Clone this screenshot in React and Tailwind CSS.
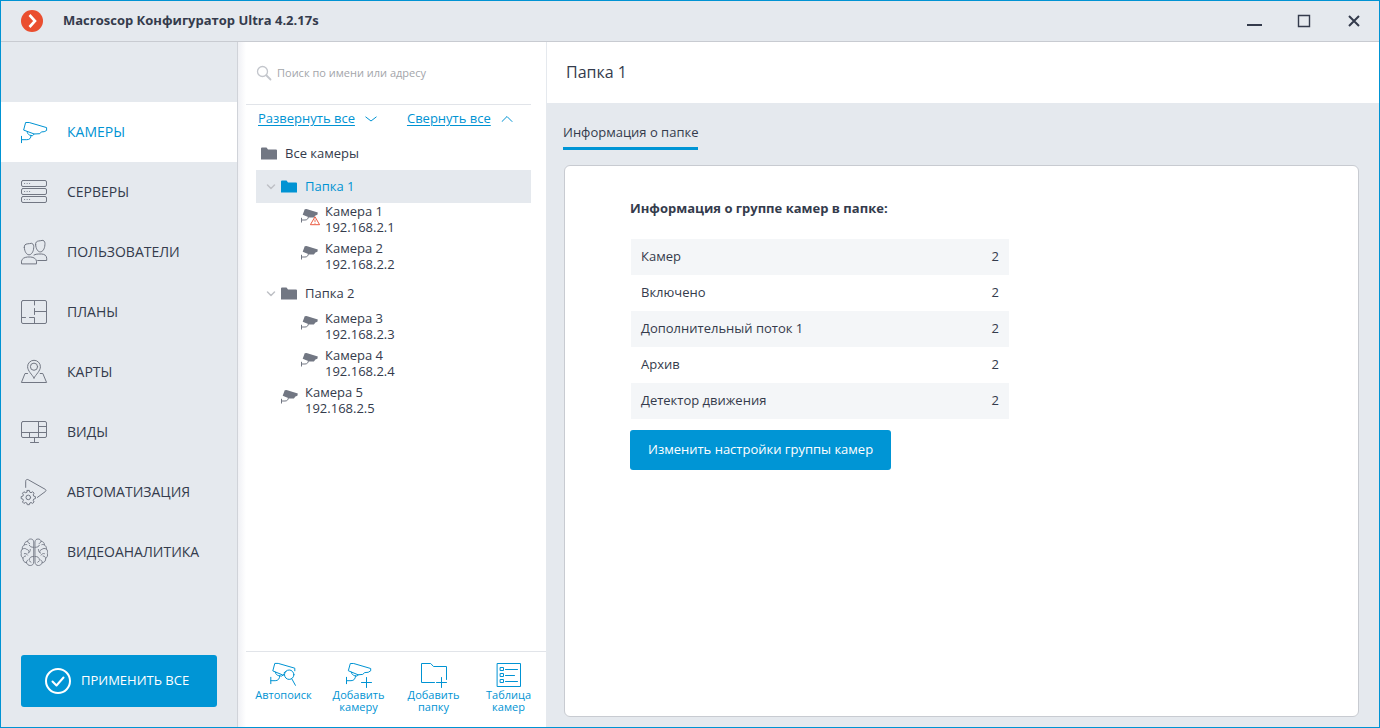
import React, { useState } from 'react';

const IconSvg = ({ width = 28, height = 28, className = '', children }) => (
  <svg
    width={width}
    height={height}
    viewBox={`0 0 ${width} ${height}`}
    fill="none"
    stroke="currentColor"
    strokeLinecap="round"
    strokeLinejoin="round"
    className={`shrink-0 ${className}`}
    aria-hidden="true"
  >
    {children}
  </svg>
);

// Sidebar icons
const CameraIcon = () => (
  <IconSvg>
    <path d="M6 4.5h3.2L26.6 9.6v2.9l-2.4 1.2-2.8.2-1.6 1.8-5.6.3L4 12.2z" />
    <path d="M7.2 13.8c.2 1.7 1 2.5 2.2 3.2l3 .8 1.8-1.8M11 17.5c.2 2.6-1.4 4.2-4.2 4.2H1.5M1.5 18.3v6.4" />
  </IconSvg>
);

const ServersIcon = () => (
  <IconSvg>
    {[2.5, 10.5, 18.5].map((y) => (
      <g key={y}>
        <rect x="1.5" y={y} width="25" height="6" rx="1.5" />
        <path d={`M4.6 ${y + 3}h.1M7.1 ${y + 3}h.1M9.6 ${y + 3}h.1`} />
      </g>
    ))}
  </IconSvg>
);

const UsersIcon = () => (
  <IconSvg>
    <path d="M4.3 9.5C4 7 5.5 6 7.2 5.9c1.9 0 2.7-.6 4.6-.6 1.9.9 2.1 2.6 1.9 4.5-.2 4-2.3 7-4.7 7s-4.4-3-4.7-7.3z" />
    <path d="M1.5 25.5v-2.3c.4-2.6 2.8-3.9 6-4.2h3.2c3.2.3 5.4 1.7 5.8 4.2v2.3z" />
    <path d="M15.6 6.7c-.3-2.5 1.2-3.5 2.9-3.7 1.9 0 2.6-.7 4.5-.7 1.9.9 2.1 2.6 1.9 4.5-.2 4-2.2 7.1-4.6 7.1s-4.4-2.9-4.7-7.2z" />
    <path d="M14 17c1.3-.7 2.8-1 4.8-1h2.9c2.9.3 4.8 1.5 5 4.2v2.3h-9" />
  </IconSvg>
);

const PlansIcon = () => (
  <IconSvg>
    <rect x="1.5" y="2.5" width="25" height="23" rx="1.5" />
    <path d="M14.5 2.5v4.5M14.5 10.5v6M14.5 13.5h12M1.5 19.5h4M9.5 19.5h5v6" />
  </IconSvg>
);

const MapsIcon = () => (
  <IconSvg>
    <path d="M14 20c-1.8-3.5-6.4-7-6.4-11.3a6.4 6.4 0 0 1 12.8 0C20.4 13 15.8 16.5 14 20z" />
    <circle cx="14" cy="8.7" r="3.6" />
    <path d="M7.5 15.5H5l-3.6 9h25.2l-3.8-9h-2.6" />
  </IconSvg>
);

const ViewsIcon = () => (
  <IconSvg>
    <rect x="1.5" y="3.5" width="25" height="16" rx="1.5" />
    <path d="M1.5 14.5h25M18.5 3.5v16M18.5 8.5h8M9.5 14.5v5M14.5 19.5v5M10.5 24.5h8" />
  </IconSvg>
);

const AutomationIcon = () => (
  <IconSvg>
    <path d="M5.7 9.4V3.2c0-1.4 1.2-2.2 2.5-1.5l17 9.6c1 .6 1 1.5.2 2.2l-8 5.9" />
    <path d="M7.3 12.4h2l.5 1.8 1.2.5 1.7-.9 1.4 1.4-.9 1.7.5 1.2 1.7.5v2l-1.7.5-.5 1.2.9 1.7-1.4 1.4-1.7-.9-1.2.5-.5 1.7h-2l-.5-1.7-1.2-.5-1.7.9-1.4-1.4.9-1.7-.5-1.2-1.7-.5v-2l1.7-.5.5-1.2-.9-1.7 1.4-1.4 1.7.9 1.2-.5z" />
    <circle cx="8.3" cy="19.4" r="2.3" />
  </IconSvg>
);

const brainHalf =
  'M13.7 3.5c-.2-1.7-1.5-2.5-3-2.5-1.7 0-2.8 1-3.1 2.3-2.2.2-3.4 1.7-3.3 3.7C2.6 8 2 9.4 2.4 11 1 12.2.8 14 1.3 15.5c-.6 2 .2 3.8 1.7 4.7-.2 2.6 1.2 4.3 3.5 4.5.8 1.9 2 2.8 3.8 2.8 2 0 3.4-1.2 3.4-3.2zM7.6 3.3c.2 1.2.9 1.9 2 2.2M4.3 7c.6-.5 1.6-.7 2.5-.4M13.7 9.3c-2.7 0-3.9-.7-4.3-2M2.4 11c1.5-.9 3.3-.7 4.3.4 1.3.2 2.4 1.2 2.4 2.8M10.3 11.5c0 1.6-.6 2.8-2.2 3.6M4.3 15.6c1.3-.4 2.6.2 3.3 1.5M3 20.2c.2-1.3 1.3-2.1 2.6-2.2M13.7 18.5c-2.6-.2-4.2.9-4.4 3M6.500 24.700c-.2-1.300.4-2.200 1.500-2.700M11 24.200l-1.700-1.400';

const AnalyticsIcon = () => (
  <IconSvg>
    <g strokeWidth="0.9">
      <path d={brainHalf} />
      <path d={brainHalf} transform="translate(28.7 0) scale(-1 1)" />
    </g>
  </IconSvg>
);

// Tree icons
const FolderIcon = () => (
  <svg width="16" height="13" viewBox="0 0 16 13" fill="currentColor" className="shrink-0" aria-hidden="true">
    <path d="M0 1.5Q0 .5 1 .5h4.500L7 2.500h8q1 0 1 1v9H0z" />
  </svg>
);

const TreeCameraIcon = ({ warning }) => (
  <svg width="20" height="18" viewBox="0 0 20 18" className="shrink-0 text-[#727783]" aria-hidden="true">
    <path d="M3.7 1.3 5.5 1l11.3 3.6-.4 2.2-2 .6-1.5 2-4.5.1L1.7 6.8z" fill="currentColor" />
    <path d="M7.5 8.5c-.3 2.5-1.5 3.500-3.500 3.500H.5M.5 9.800v4.700" fill="none" stroke="currentColor" />
    {warning && (
      <g stroke="#ea5b41" strokeLinejoin="round">
        <path d="M14 8.800l4.600 7.900H9.400z" fill="#fff" />
        <path d="M14 11.500v2.700M14 15.100v.7" fill="none" strokeWidth="0.9" />
      </g>
    )}
  </svg>
);

const Chevron = ({ width, height, d, strokeWidth = 1 }) => (
  <IconSvg width={width} height={height}>
    <path d={d} strokeWidth={strokeWidth} />
  </IconSvg>
);

// Toolbar icons
const AutoSearchIcon = () => (
  <IconSvg height={26}>
    <path d="M14.5 12.7l-2 .2L2.8 8.9l2-7.5h3.4l16.6 4.800v2.600M16 9.300l-2 1.500" />
    <path d="M5.300 10.200c.2 1.800 1.500 3 3.500 3.500l2.800.4 2-1.300M9.700 14c0 2.900-1.700 4.700-4.500 4.700H.8M.8 15.300v6.400" />
    <circle cx="19.2" cy="12.7" r="4.7" />
    <path d="M21.800 16.800l3.600 6.500" />
  </IconSvg>
);

const AddCameraIcon = () => (
  <IconSvg height={26}>
    <path d="M5.700 1.500h3l17 5v2.300l-2.500 1.500-3.500.3-2 1.800-4.600.4L3.700 8.900z" />
    <path d="M6.300 10.200c.2 1.800 1.500 3 3.500 3.500l2.300.4 1.300-1.300M10.500 14c0 2.900-1.700 4.700-4.500 4.700H1.500M1.500 15.300v6.400M21.500 15.500v10M16.500 20.500h10" />
  </IconSvg>
);

const AddFolderIcon = () => (
  <IconSvg height={26}>
    <path d="M14.500 20.500h-13v-19h9.200l2.800 3h13v13M21.500 15.500v10M16.500 20.500h10" />
  </IconSvg>
);

const CameraTableIcon = () => (
  <IconSvg height={26}>
    <path d="M2.500 1.500h23v23h-23zM5.500 5.500h3v3h-3zM5.500 11.500h3v3h-3zM5.500 17.500h3v3h-3zM10.500 7.500h12M10.500 13.500h9M10.500 19.500h12" />
  </IconSvg>
);

const navItems = [
  { id: 'cameras', label: 'КАМЕРЫ', Icon: CameraIcon },
  { id: 'servers', label: 'СЕРВЕРЫ', Icon: ServersIcon },
  { id: 'users', label: 'ПОЛЬЗОВАТЕЛИ', Icon: UsersIcon },
  { id: 'plans', label: 'ПЛАНЫ', Icon: PlansIcon },
  { id: 'maps', label: 'КАРТЫ', Icon: MapsIcon },
  { id: 'views', label: 'ВИДЫ', Icon: ViewsIcon },
  { id: 'automation', label: 'АВТОМАТИЗАЦИЯ', Icon: AutomationIcon },
  { id: 'analytics', label: 'ВИДЕОАНАЛИТИКА', Icon: AnalyticsIcon },
];

const folders = [
  {
    name: 'Папка 1',
    cameras: [
      { name: 'Камера 1', ip: '192.168.2.1', warning: true },
      { name: 'Камера 2', ip: '192.168.2.2' },
    ],
  },
  {
    name: 'Папка 2',
    cameras: [
      { name: 'Камера 3', ip: '192.168.2.3' },
      { name: 'Камера 4', ip: '192.168.2.4' },
    ],
  },
];

const tools = [
  { label: 'Автопоиск', Icon: AutoSearchIcon },
  { label: 'Добавить камеру', Icon: AddCameraIcon },
  { label: 'Добавить папку', Icon: AddFolderIcon },
  { label: 'Таблица камер', Icon: CameraTableIcon },
];

const stats = [
  ['Камер', 2],
  ['Включено', 2],
  ['Дополнительный поток 1', 2],
  ['Архив', 2],
  ['Детектор движения', 2],
];

const TitleBar = () => (
  <header className="flex h-[41px] items-center border-b border-[#c8cbd1] bg-[#e5e9ee] pr-[17px] pl-5">
    <svg width="22" height="22" viewBox="0 0 22 22" aria-hidden="true">
      <circle cx="11" cy="11" r="11" fill="#ea4e2f" />
      <path d="M8.500 5l5.500 6-5.500 6" fill="none" stroke="#fff" strokeWidth="2.6" />
    </svg>
    <h1 className="ml-5 flex-1 pb-[2px] text-[13px] font-bold">Macroscop Конфигуратор Ultra 4.2.17s</h1>
    <div className="flex gap-[34px]">
      <button type="button" aria-label="Свернуть">
        <svg width="16" height="16" viewBox="0 0 16 16">
          <path d="M1 12h15" stroke="currentColor" strokeWidth="2" />
        </svg>
      </button>
      <button type="button" aria-label="Развернуть">
        <svg width="16" height="16" viewBox="0 0 16 16">
          <path d="M2.500 2.500h11v11h-11z" fill="none" stroke="currentColor" strokeWidth="1.4" />
        </svg>
      </button>
      <button type="button" aria-label="Закрыть">
        <svg width="16" height="16" viewBox="0 0 16 16">
          <path d="M3 3l10 10M13 3L3 13" stroke="currentColor" strokeWidth="2" />
        </svg>
      </button>
    </div>
  </header>
);

const Sidebar = ({ active, onSelect }) => (
  <aside className="flex w-[237px] shrink-0 flex-col border-r border-[#d0d3d9] bg-[#e5e9ee] pt-[60px]">
    <nav>
      {navItems.map(({ id, label, Icon }) => (
        <button
          key={id}
          type="button"
          onClick={() => onSelect(id)}
          className={`flex h-[60px] w-full items-center gap-[19px] pl-[19px] text-left text-[14px] ${
            active === id ? 'bg-white text-[#0093d3]' : 'text-[#343b4c]'
          }`}
        >
          <span className={active === id ? '' : 'text-[#727783]'}>
            <Icon />
          </span>
          {label}
        </button>
      ))}
    </nav>
    <button
      type="button"
      className="mx-5 mt-auto mb-5 flex h-[52px] items-center gap-[10px] rounded-[3px] bg-[#0095d5] pl-6 text-[13px] text-white"
    >
      <IconSvg width={26} height={26}>
        <circle cx="13" cy="13" r="12" strokeWidth="2" />
        <path d="M7.500 13.500l4 4 7-8" strokeWidth="2" />
      </IconSvg>
      <span className="pb-[2px]">ПРИМЕНИТЬ ВСЕ</span>
    </button>
  </aside>
);

const CameraRow = ({ camera, nested }) => (
  <li className={`flex h-[37px] items-start gap-1 ${nested ? 'pl-[45px]' : 'pl-[25px]'}`}>
    <span className="pt-[5px]">
      <TreeCameraIcon warning={camera.warning} />
    </span>
    <span className="leading-4">
      {camera.name}
      <br />
      {camera.ip}
    </span>
  </li>
);

const CameraTree = ({ selected, onSelect }) => {
  const [closed, setClosed] = useState([]);

  const toggle = (name) => {
    setClosed(closed.includes(name) ? closed.filter((n) => n !== name) : [...closed, name]);
  };

  return (
    <section className="flex w-[308px] shrink-0 flex-col bg-linear-to-r from-[#f0f1f5] to-white to-[8px] pl-2">
      <label className="mr-[15px] flex h-[63px] items-center gap-[5px] border-b border-[#e1e4e9] pl-[10px] text-[#c3c6cc]">
        <IconSvg width={16} height={16}>
          <circle cx="6.5" cy="6.5" r="5" strokeWidth="1.3" />
          <path d="M10.500 10.500l4 4" strokeWidth="1.8" />
        </IconSvg>
        <input
          type="text"
          aria-label="Поиск"
          placeholder="Поиск по имени или адресу"
          className="w-full text-[11px] text-[#343b4c] outline-none placeholder:text-[#a3a5aa]"
        />
      </label>

      <div className="flex h-8 items-start gap-[30px] pt-[3px] pl-3 text-[#0093d3]">
        <button type="button" onClick={() => setClosed([])} className="flex items-center gap-[10px]">
          <span className="underline underline-offset-2">Развернуть все</span>
          <Chevron width={12} height={8} d="M.8 3l5.200 4 5.200-4" />
        </button>
        <button
          type="button"
          onClick={() => setClosed(folders.map((f) => f.name))}
          className="flex items-center gap-[10px]"
        >
          <span className="underline underline-offset-2">Свернуть все</span>
          <Chevron width={12} height={8} d="M1 7.500l5-5 5 5" />
        </button>
      </div>

      <ul className="mr-[15px] ml-[10px]">
        <li className="flex h-[33px] items-center gap-2 pl-[5px]">
          <span className="text-[#727783]">
            <FolderIcon />
          </span>
          <span className="pb-[2px]">Все камеры</span>
        </li>
        {folders.map((folder) => (
          <li key={folder.name}>
            <div
              className={`flex h-[33px] items-center gap-[5px] pl-[10px] ${
                selected === folder.name ? 'bg-[#e5e9ee] text-[#0093d3]' : ''
              }`}
            >
              <button
                type="button"
                aria-label={folder.name}
                onClick={() => toggle(folder.name)}
                className="text-[#bfc1c6]"
              >
                <Chevron width={10} height={8} d="M1.500 2L5 5.500 8.500 2" strokeWidth={1.5} />
              </button>
              <button type="button" onClick={() => onSelect(folder.name)} className="flex items-center gap-2">
                <span className={selected === folder.name ? '' : 'text-[#727783]'}>
                  <FolderIcon />
                </span>
                <span className="pb-[2px]">{folder.name}</span>
              </button>
            </div>
            {!closed.includes(folder.name) && (
              <ul>
                {folder.cameras.map((camera) => (
                  <CameraRow key={camera.ip} camera={camera} nested />
                ))}
              </ul>
            )}
          </li>
        ))}
        <CameraRow camera={{ name: 'Камера 5', ip: '192.168.2.5' }} />
      </ul>

      <div className="mt-auto grid h-[76px] grid-cols-4 items-start border-t border-[#e1e4e9] pt-[10px] text-[#0093d3]">
        {tools.map(({ label, Icon }) => (
          <button key={label} type="button" className="flex flex-col items-center px-2 text-[11px] leading-3">
            <Icon />
            <span className="mt-px">{label}</span>
          </button>
        ))}
      </div>
    </section>
  );
};

const FolderInfo = ({ name }) => (
  <main className="flex min-w-0 flex-1 flex-col border-l border-[#e5e9ee] bg-[#e5e9ee]">
    <h2 className="flex h-[61px] items-center bg-white pb-[2px] pl-[19px] text-[16px]">{name}</h2>
    <div className="pt-[19px] pl-4">
      <button type="button" className="border-b-3 border-[#0095d5] pb-[5px]">
        Информация о папке
      </button>
    </div>
    <div className="mt-[15px] mr-5 mb-[10px] ml-[17px] flex-1 rounded-md border border-[#c8cbd1] bg-white pt-8 pl-[65px]">
      <h3 className="font-bold">Информация о группе камер в папке:</h3>
      <table className="mt-[21px] ml-px w-[378px]">
        <tbody>
          {stats.map(([label, value]) => (
            <tr key={label} className="h-9 odd:bg-[#f4f6f8]">
              <th scope="row" className="pb-[2px] pl-[10px] text-left font-normal">
                {label}
              </th>
              <td className="pr-[10px] pb-[2px] text-right">{value}</td>
            </tr>
          ))}
        </tbody>
      </table>
      <button type="button" className="mt-[11px] h-10 rounded-[3px] bg-[#0095d5] px-[18px] pb-[2px] text-white">
        Изменить настройки группы камер
      </button>
    </div>
  </main>
);

export default function App() {
  const [section, setSection] = useState('cameras');
  const [selected, setSelected] = useState('Папка 1');

  return (
    <div className="flex min-h-screen flex-col border border-[#0093d3] bg-white font-['Open_Sans','Noto_Sans',sans-serif] text-[13px] leading-5 text-[#343b4c]">
      <TitleBar />
      <div className="flex flex-1">
        <Sidebar active={section} onSelect={setSection} />
        <CameraTree selected={selected} onSelect={setSelected} />
        <FolderInfo name={selected} />
      </div>
    </div>
  );
}
